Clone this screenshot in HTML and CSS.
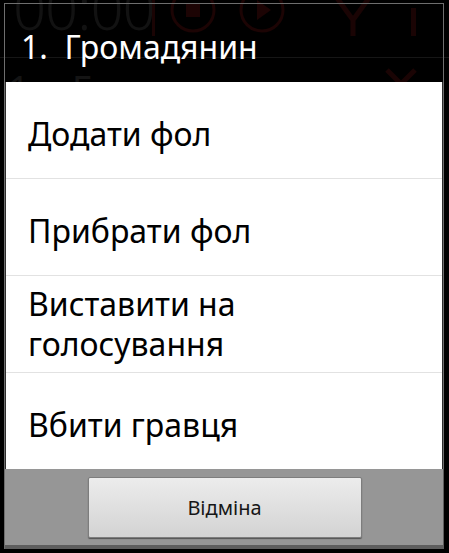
FILE: index.html
```html
<!DOCTYPE html>
<html lang="uk">
<head>
<meta charset="utf-8">
<title>Громадянин</title>
<link rel="stylesheet" href="styles.css">
</head>
<body>
<div class="screen">
  <div class="backdrop" aria-hidden="true">
    <span class="ghost-clock">00:00</span>
    <span class="ghost-bar"></span>
    <svg class="ghost-icon ghost-stop" width="48" height="48" viewBox="0 0 48 48"><circle cx="24" cy="24" r="21" fill="none" stroke="#1c0404" stroke-width="3"/><rect x="17" y="17" width="14" height="14" fill="#1c0404"/></svg>
    <svg class="ghost-icon ghost-play" width="48" height="48" viewBox="0 0 48 48"><circle cx="24" cy="24" r="21" fill="none" stroke="#1c0404" stroke-width="3"/><path d="M19 14 L33 24 L19 34 Z" fill="#1c0404"/></svg>
    <svg class="ghost-icon ghost-vote" width="40" height="44" viewBox="0 0 40 44"><path d="M4 2 L20 24 L36 2 M20 24 L20 40" fill="none" stroke="#1a0404" stroke-width="5"/></svg>
    <span class="ghost-excl"></span>
    <span class="ghost-line"></span>
    <span class="ghost-row">1.  Громадянин</span>
    <svg class="ghost-icon ghost-x" width="34" height="20" viewBox="0 0 34 20"><path d="M3 2 L31 30 M31 2 L3 30" stroke="#1a0404" stroke-width="5"/></svg>
  </div>

  <div class="dialog">
    <div class="dialog-title">1.  Громадянин</div>
    <ul class="menu">
      <li class="menu-item menu-item--single">Додати фол</li>
      <li class="menu-item menu-item--single">Прибрати фол</li>
      <li class="menu-item">Виставити на<br>голосування</li>
      <li class="menu-item menu-item--single">Вбити гравця</li>
    </ul>
    <div class="button-bar">
      <button class="btn" type="button">Відміна</button>
    </div>
  </div>
</div>
</body>
</html>
```

FILE: styles.css
```css
* { box-sizing: border-box; }

html, body {
  margin: 0;
  padding: 0;
  background: #000;
}

body {
  width: 449px;
  height: 553px;
  overflow: hidden;
  font-family: "Noto Sans", "Open Sans", "DejaVu Sans", sans-serif;
}

.screen {
  position: relative;
  width: 449px;
  height: 553px;
  background: #000;
}

/* dimmed activity behind the dialog */
.backdrop {
  position: absolute;
  inset: 0;
  overflow: hidden;
}

.ghost-clock {
  position: absolute;
  left: 13px;
  top: -14px;
  font-size: 58px;
  line-height: 44px;
  font-weight: 300;
  color: #121212;
  letter-spacing: -1px;
}

.ghost-bar {
  position: absolute;
  left: 152px;
  top: 0;
  width: 3px;
  height: 36px;
  background: #1a0404;
}

.ghost-icon { position: absolute; }
.ghost-stop { left: 169px; top: -14px; }
.ghost-play { left: 238px; top: -14px; }
.ghost-vote { left: 333px; top: -4px; }
.ghost-x { left: 384px; top: 68px; }

.ghost-excl {
  position: absolute;
  left: 411px;
  top: 8px;
  width: 5px;
  height: 28px;
  background: #1a0404;
}

.ghost-line {
  position: absolute;
  left: 0;
  right: 0;
  top: 57px;
  height: 1px;
  background: #161616;
}

.ghost-row {
  position: absolute;
  left: 8px;
  top: 73px;
  font-size: 38px;
  line-height: 30px;
  color: #141414;
  white-space: pre;
  letter-spacing: 3px;
}

/* dialog */
.dialog {
  position: absolute;
  left: 4px;
  top: 3px;
  width: 440px;
  border: 1px solid #6e6e6e;
  border-bottom: 0;
  display: flex;
  flex-direction: column;
}

.dialog-title {
  height: 78px;
  padding: 27px 0 0 16px;
  font-size: 32px;
  line-height: 32px;
  color: #fff;
  white-space: pre;
}

.menu {
  list-style: none;
  margin: 0;
  padding: 0;
  background: #fff;
  border-left: 1px solid #2e2e2e;
  border-right: 1px solid #2e2e2e;
}

.menu-item {
  height: 97px;
  display: flex;
  align-items: center;
  padding: 0 0 0 22px;
  font-size: 32px;
  line-height: 40px;
  color: #000;
  border-bottom: 1px solid #e2e2e2;
}

.menu-item--single { padding-top: 7px; }

.menu-item:last-child {
  height: 96px;
  border-bottom: 0;
}

.button-bar {
  height: 80px;
  padding: 8px 0 0;
  background: #969696;
  border-bottom: 4px solid #5e5e5e;
  box-shadow: 1px 0 0 #5e5e5e;
  display: flex;
  justify-content: center;
  align-items: flex-start;
}

.btn {
  width: 274px;
  height: 61px;
  margin-left: 1px;
  border: 1px solid #7d7d7d;
  border-radius: 2px;
  background: linear-gradient(#ececec, #d3d3d3);
  box-shadow: 0 1px 1px rgba(0, 0, 0, 0.45);
  font-family: "Noto Sans", "Open Sans", sans-serif;
  font-size: 20px;
  color: #161616;
  padding: 0;
}
```
